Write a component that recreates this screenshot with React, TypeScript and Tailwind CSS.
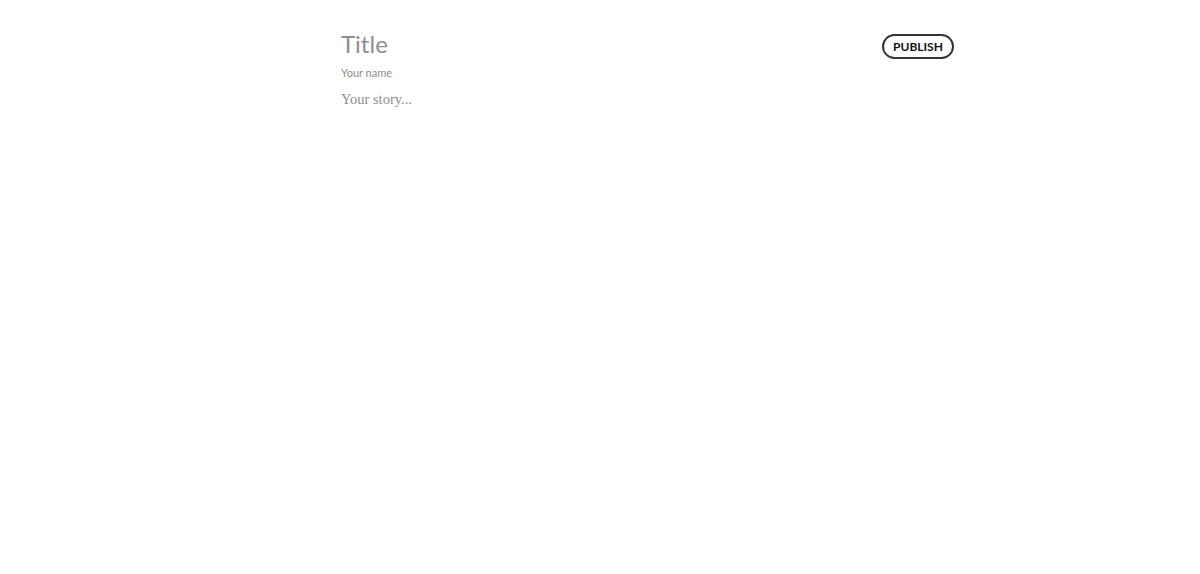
export default function App() {
  return (
    <div className="min-h-[574px] w-full bg-white font-['Lato','Noto_Sans',sans-serif]">
      <div className="ml-[341px] flex w-[613px] items-start justify-between pt-[29px]">
        <div className="flex flex-col">
          <div className="text-[24px] leading-[30px] text-[#8e8e8e]">Title</div>
          <div className="mt-[6px] text-[11px] leading-[15px] text-[#8e8e8e]">Your name</div>
          <div className="mt-[9px] font-['Liberation_Serif',serif] text-[14.5px] leading-[20px] text-[#8e8e8e]">
            Your story...
          </div>
        </div>
        <button className="mt-[5px] h-[25px] w-[72px] rounded-full border-2 border-[#333] text-[12px] font-bold leading-[20px] text-[#111]">
          PUBLISH
        </button>
      </div>
    </div>
  );
}
